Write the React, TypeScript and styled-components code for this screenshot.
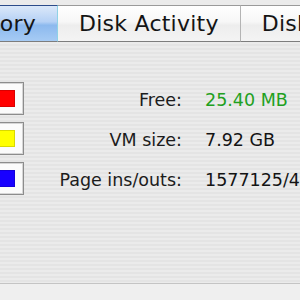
import { FC } from 'react'
import styled, { createGlobalStyle } from 'styled-components'

const GlobalStyle = createGlobalStyle`
  html, body {
    margin: 0;
    padding: 0;
    overflow: hidden;
  }
  body {
    font-family: 'DejaVu Sans', 'Liberation Sans', sans-serif;
    background: #ececec;
  }
`

interface Stat {
  label: string
  value: string
  color: string
  valueColor?: string
}

const stats: Stat[] = [
  { label: 'Free:', value: '25.40 MB', color: '#ff0000', valueColor: '#22a01e' },
  { label: 'VM size:', value: '7.92 GB', color: '#ffff00' },
  { label: 'Page ins/outs:', value: '1577125/4', color: '#1800ff' },
]

const tabs = [
  { name: 'Memory', active: true },
  { name: 'Disk Activity', active: false },
  { name: 'Disk Usage', active: false },
]

const App: FC = () => {
  return (
    <Window>
      <GlobalStyle />
      <TopStrip />
      <TabBar>
        {tabs.map((tab) => (
          <Tab key={tab.name} $active={tab.active}>
            {tab.name}
          </Tab>
        ))}
      </TabBar>
      <Content>
        {stats.map((stat) => (
          <Row key={stat.label}>
            <SwatchFrame>
              <Swatch $color={stat.color} />
            </SwatchFrame>
            <Label>{stat.label}</Label>
            <Value $color={stat.valueColor}>{stat.value}</Value>
          </Row>
        ))}
      </Content>
      <Footer />
    </Window>
  )
}

const Window = styled.div`
  width: 300px;
  height: 300px;
  display: flex;
  flex-direction: column;
  overflow: hidden;
`

const TopStrip = styled.div`
  height: 5px;
  background: #ebebeb;
  flex-shrink: 0;
`

const TabBar = styled.div`
  display: flex;
  flex-direction: row;
  height: 37px;
  margin-left: -76px;
  flex-shrink: 0;
`

const Tab = styled.div<{ $active: boolean }>`
  flex-shrink: 0;
  padding: 0 21px;
  display: flex;
  align-items: center;
  justify-content: center;
  font-size: 22px;
  letter-spacing: 0.25px;
  white-space: nowrap;
  color: #141414;
  border-top: 1px solid ${(p) => (p.$active ? '#2d4c8a' : '#9a9a9a')};
  border-bottom: 1px solid #7d7d7d;
  border-right: 1px solid ${(p) => (p.$active ? '#8fd2e6' : '#b4b4b4')};
  background: ${(p) =>
    p.$active
      ? 'linear-gradient(#dbe8f9 0%, #b5d1f5 45%, #8cb9ee 55%, #a6cbf4 100%)'
      : 'linear-gradient(#ffffff 0%, #f7f7f7 45%, #ededed 55%, #f4f4f4 100%)'};
`

const Content = styled.div`
  flex: 1;
  display: flex;
  flex-direction: column;
  gap: 7px;
  padding-top: 40px;
  background: repeating-linear-gradient(#ebebeb 0 2px, #e4e4e4 2px 4px);
  border-bottom: 1px solid #c4c4c4;
`

const Row = styled.div`
  display: grid;
  grid-template-columns: 24px 135px 1fr;
  column-gap: 23px;
  align-items: center;
  height: 33px;
`

const SwatchFrame = styled.div`
  width: 34px;
  height: 33px;
  margin-left: -10px;
  box-sizing: border-box;
  border: 1px solid #8c8c8c;
  box-shadow: inset 0 0 0 1px #d6d6d6;
  background: #fbfbfb;
  display: flex;
  align-items: center;
  justify-content: center;
`

const Swatch = styled.div<{ $color: string }>`
  width: 17px;
  height: 17px;
  box-sizing: border-box;
  background: ${(p) => p.$color};
  border: 1px solid rgba(0, 0, 0, 0.15);
  margin-left: -1px;
`

const Label = styled.div`
  text-align: right;
  font-size: 17.5px;
  color: #1c1c1c;
  white-space: nowrap;
  padding-top: 3px;
`

const Value = styled.div<{ $color?: string }>`
  font-size: 17.5px;
  color: ${(p) => p.$color || '#141414'};
  white-space: nowrap;
  padding-top: 3px;
`

const Footer = styled.div`
  height: 16px;
  flex-shrink: 0;
  background: #efefef;
`

export default App
